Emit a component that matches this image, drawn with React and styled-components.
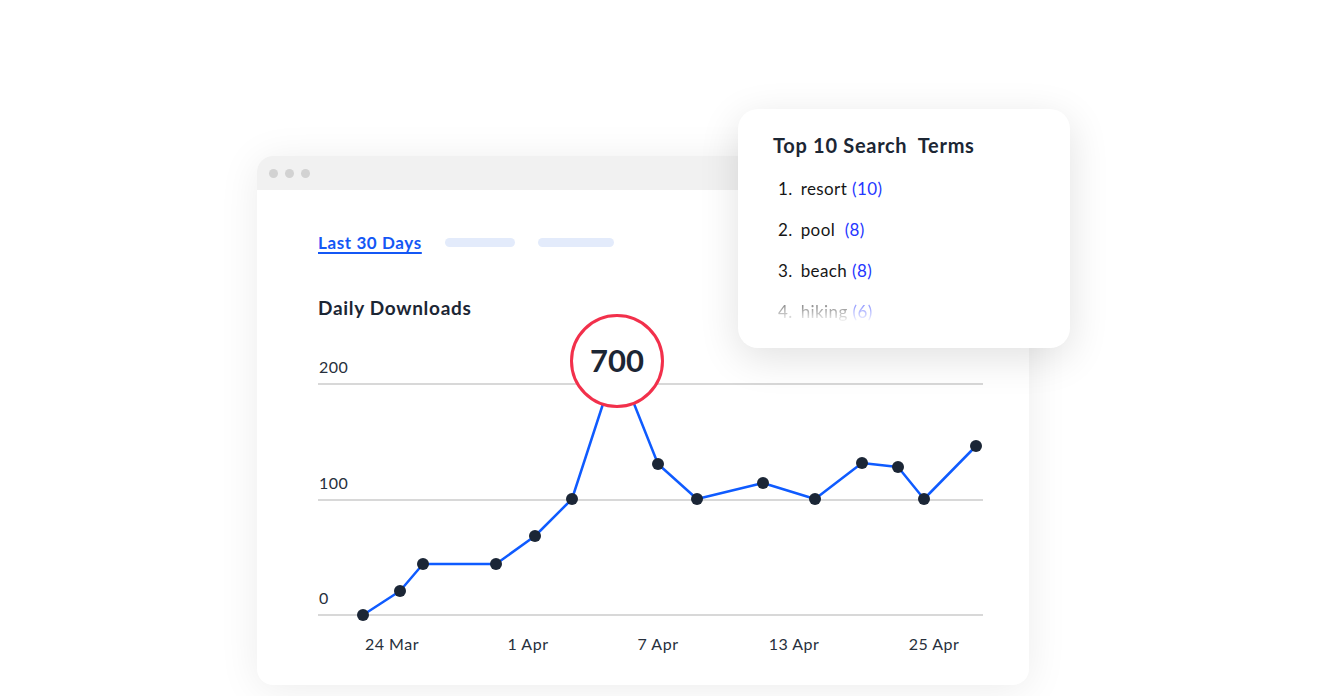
import styled, { createGlobalStyle } from 'styled-components';

const GlobalStyle = createGlobalStyle`
  html, body {
    margin: 0;
    padding: 0;
    background: #ffffff;
    font-family: Lato, 'Open Sans', sans-serif;
  }
`;

const ink = '#1c2634';
const lineBlue = '#0f5bff';

const points = [
  [45, 315], [82, 291], [105, 264], [178, 264], [217, 236], [254, 199],
  [299, 61],
  [340, 164], [379, 199], [445, 183], [497, 199], [544, 163], [580, 167],
  [606, 199], [658, 146],
];
const peakIndex = 6;

const gridLines = [
  { y: 84, label: '200' },
  { y: 200, label: '100' },
  { y: 315, label: '0' },
];

const xLabels = [
  { x: 74, label: '24 Mar' },
  { x: 210, label: '1 Apr' },
  { x: 340, label: '7 Apr' },
  { x: 476, label: '13 Apr' },
  { x: 616, label: '25 Apr' },
];

const terms = [
  { name: 'resort', count: 10 },
  { name: 'pool\u00a0', count: 8 },
  { name: 'beach', count: 8 },
  { name: 'hiking', count: 6, faded: true },
];

function DownloadsChart() {
  const [px, py] = points[peakIndex];
  return (
    <ChartSvg width="680" height="365" viewBox="0 0 680 365">
      {gridLines.map((g) => (
        <g key={g.label}>
          <line x1="0" x2="665" y1={g.y} y2={g.y} stroke="#d8d8d8" strokeWidth="2" />
          <AxisText x="1" y={g.y - 11}>{g.label}</AxisText>
        </g>
      ))}
      {xLabels.map((l) => (
        <AxisText key={l.label} x={l.x} y="350" textAnchor="middle">{l.label}</AxisText>
      ))}
      <polyline
        points={points.map((p) => p.join(',')).join(' ')}
        fill="none"
        stroke={lineBlue}
        strokeWidth="2.5"
        strokeLinejoin="round"
      />
      {points.map(([x, y], i) =>
        i === peakIndex ? null : <circle key={i} cx={x} cy={y} r="6" fill="#1b2636" />
      )}
      <circle cx={px} cy={py} r="45.5" fill="#ffffff" stroke="#f2304b" strokeWidth="3" />
      <PeakText x={px} y={py + 11} textAnchor="middle">700</PeakText>
    </ChartSvg>
  );
}

export default function App() {
  return (
    <>
      <GlobalStyle />
      <Stage>
        <Card>
          <TitleBar>
            <Dot />
            <Dot />
            <Dot />
          </TitleBar>
          <CardBody>
            <Tabs>
              <ActiveTab>Last 30 Days</ActiveTab>
              <Pill $width={70} />
              <Pill $width={76} />
            </Tabs>
            <ChartTitle>Daily Downloads</ChartTitle>
            <DownloadsChart />
          </CardBody>
        </Card>
        <Popup>
          <PopupTitle>Top 10 Search&nbsp; Terms</PopupTitle>
          <TermList>
            {terms.map((t, i) => (
              <Term key={t.name} $faded={t.faded}>
                <span>{i + 1}.</span>
                <span>
                  {t.name} <Count>({t.count})</Count>
                </span>
              </Term>
            ))}
          </TermList>
        </Popup>
      </Stage>
    </>
  );
}

const Stage = styled.div`
  position: relative;
  width: 1329px;
  height: 696px;
  box-sizing: border-box;
  padding: 156px 0 0 257px;
  overflow: hidden;
`;

const Card = styled.div`
  width: 772px;
  height: 529px;
  background: #ffffff;
  border-radius: 16px;
  overflow: hidden;
  box-shadow: 0 4px 40px rgba(0, 0, 0, 0.08);
  display: flex;
  flex-direction: column;
`;

const TitleBar = styled.div`
  height: 34px;
  background: #f1f1f1;
  display: flex;
  align-items: center;
  gap: 7px;
  padding-left: 12px;
`;

const Dot = styled.span`
  width: 9px;
  height: 9px;
  border-radius: 50%;
  background: #d2d2d2;
`;

const CardBody = styled.div`
  display: flex;
  flex-direction: column;
  padding: 41px 0 0 61px;
`;

const Tabs = styled.div`
  display: flex;
  align-items: center;
  gap: 23px;
  height: 22px;
`;

const ActiveTab = styled.span`
  font-size: 17px;
  font-weight: 700;
  letter-spacing: 0.6px;
  color: #1457f5;
  text-decoration: underline;
  text-underline-offset: 3px;
  text-decoration-thickness: 1.5px;
`;

const Pill = styled.span`
  width: ${(p) => p.$width}px;
  height: 9px;
  border-radius: 5px;
  background: #e3ebfb;
`;

const ChartTitle = styled.h2`
  margin: 43px 0 0;
  font-size: 19px;
  font-weight: 700;
  letter-spacing: 0.7px;
  color: ${ink};
  line-height: 24px;
`;

const ChartSvg = styled.svg`
  display: block;
  margin-top: -20px;
  overflow: visible;
`;

const AxisText = styled.text`
  font-family: Lato, sans-serif;
  font-size: 16px;
  letter-spacing: 0.5px;
  fill: #27303c;
`;

const PeakText = styled.text`
  font-family: Lato, sans-serif;
  font-size: 31px;
  font-weight: 700;
  fill: ${ink};
`;

const Popup = styled.div`
  position: absolute;
  left: 738px;
  top: 109px;
  width: 332px;
  height: 239px;
  box-sizing: border-box;
  padding: 22px 0 0 35px;
  background: #ffffff;
  border-radius: 20px;
  box-shadow: 0 10px 40px rgba(0, 0, 0, 0.12);
  overflow: hidden;
`;

const PopupTitle = styled.h3`
  margin: 0;
  font-size: 20px;
  font-weight: 700;
  letter-spacing: 0.7px;
  color: ${ink};
  line-height: 28px;
`;

const TermList = styled.ol`
  list-style: none;
  margin: 18px 0 0;
  padding: 0 0 0 5px;
  display: flex;
  flex-direction: column;
  gap: 18px;
`;

const Term = styled.li`
  display: flex;
  gap: 8px;
  font-size: 17px;
  letter-spacing: 0.4px;
  line-height: 23px;
  color: #161616;
  opacity: ${(p) => (p.$faded ? 0.45 : 1)};
  ${(p) =>
    p.$faded &&
    `-webkit-mask-image: linear-gradient(to bottom, #000 30%, transparent 100%);
     mask-image: linear-gradient(to bottom, #000 30%, transparent 100%);`}
`;

const Count = styled.span`
  color: #2536ff;
`;
